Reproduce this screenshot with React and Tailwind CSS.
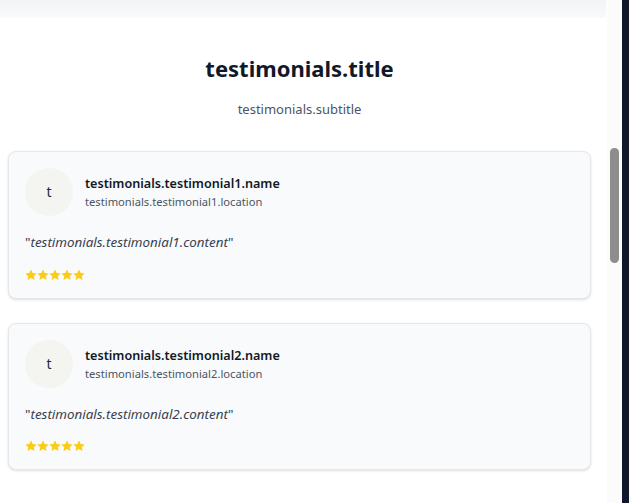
import React from "react";

function Star() {
  return (
    <svg width="12" height="12" viewBox="0 0 24 24" className="block">
      <path
        d="M12 0.8l3.4 7.1 7.8 1-5.7 5.4 1.5 7.7L12 18.2l-7 3.8 1.5-7.7L0.8 8.9l7.8-1z"
        fill="#facc15"
      />
    </svg>
  );
}

function Card({ n }) {
  return (
    <div className="rounded-lg border border-[#e5e7eb] bg-[#f9fafb] p-4 shadow-sm">
      <div className="mb-4 flex items-center gap-3">
        <div className="flex h-12 w-12 items-center justify-center rounded-full bg-[#f4f4f1] text-sm text-[#1f2937]">
          t
        </div>
        <div>
          <div className="text-[12.6px] leading-5 font-semibold text-[#111827]">
            testimonials.testimonial{n}.name
          </div>
          <div className="text-[11.2px] leading-4 text-[#4b5563]">
            testimonials.testimonial{n}.location
          </div>
        </div>
      </div>
      <p className="mb-4 text-[13.4px] leading-5 text-[#374151]">
        "<span className="italic">testimonials.testimonial{n}.content</span>"
      </p>
      <div className="flex h-[13.5px] items-center gap-0">
        <Star />
        <Star />
        <Star />
        <Star />
        <Star />
      </div>
    </div>
  );
}

export default function App() {
  return (
    <div
      className="flex h-[503px] w-[629px] overflow-hidden bg-white"
      style={{ fontFamily: '"Noto Sans", "Open Sans", sans-serif' }}
    >
      <div className="w-[607px] shrink-0">
        <div className="h-[18px] w-[606px] bg-gradient-to-b from-[#f3f4f6] to-[#f9fafb]" />
        <div className="pl-2 pr-4 pt-[34px]">
          <h2 className="text-center text-[22px] leading-8 font-bold text-[#111827]">
            testimonials.title
          </h2>
          <p className="mt-[15px] text-center text-[13px] leading-5 text-[#4b5563]">
            testimonials.subtitle
          </p>
          <div className="mt-8 flex flex-col gap-6">
            <Card n={1} />
            <Card n={2} />
          </div>
        </div>
      </div>
      <div className="relative w-[15px] shrink-0 bg-[#fbfbfb]">
        <div className="absolute left-[3px] top-[148px] h-[115px] w-[9px] rounded-full bg-[#8d8d8d]" />
      </div>
      <div className="w-[7px] shrink-0 bg-[#0f172a]" />
    </div>
  );
}
